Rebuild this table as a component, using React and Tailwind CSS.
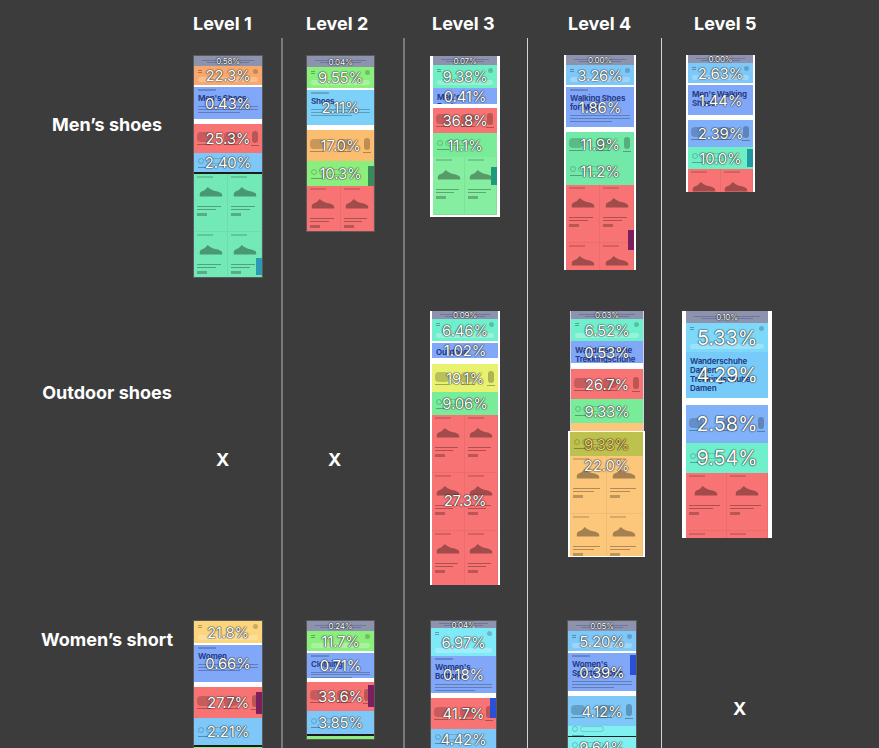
import React from "react";

const Shoe = ({ className = "" }) => (
  <svg viewBox="0 0 30 16" className={className}>
    <path d="M1 12 C1 9 4 8 7 7 L11 3 C13 5 16 7 20 8 C25 9 29 10 29 13 L29 15 L1 15 Z" fill="currentColor" />
  </svg>
);

function Pct({ p, size = "text-[15px]", pos = "center", tone = "text-white" }) {
  if (!p) return null;
  return (
    <div
      className={`absolute inset-0 flex justify-center ${pos === "top" ? "items-start pt-[2px]" : "items-center"} pointer-events-none`}
    >
      <span
        className={`${size} ${tone} leading-none font-['Inter',sans-serif] font-normal tracking-[-0.2px] [text-shadow:0_0_1px_#222,0_0_1px_#222,0_0_2px_rgba(0,0,0,0.5)]`}
      >
        {p}
      </span>
    </div>
  );
}

function Content({ s }) {
  switch (s.k) {
    case "hdr":
      return (
        <div className="h-full flex flex-col items-center justify-center gap-[1px] px-[8px]">
          <div className="w-full h-[1px] bg-[#3b4a8a]/40" />
          <div className="w-[80%] h-[1px] bg-[#3b4a8a]/40" />
        </div>
      );
    case "nav":
      return (
        <div className="h-full flex flex-col justify-between px-[4px] py-[3px]">
          <div className="flex justify-between items-center">
            <div className="w-[4px] h-[3px] border-y border-black/30" />
            <div className="w-[5px] h-[5px] rounded-sm bg-black/20" />
          </div>
          <div className="h-[5px] rounded-full bg-white/25" />
        </div>
      );
    case "title":
      return (
        <div className="h-full flex flex-col px-[4px] pt-[2px] overflow-hidden">
          <div className="w-[18px] h-[2px] bg-black/20" />
          <div className="mt-[3px] text-[8px] leading-[9px] font-bold text-[#1d2f7a]/90 font-['Inter',sans-serif] tracking-[-0.2px]">
            {s.t}
          </div>
          <div className="mt-[3px] w-full h-[1px] bg-black/25" />
          <div className="mt-[2px] w-full h-[1px] bg-black/25" />
          <div className="mt-[2px] w-[70%] h-[1px] bg-black/25" />
        </div>
      );
    case "cats":
      return (
        <div className="h-full flex justify-between items-center px-[3px] overflow-hidden">
          <div className="flex flex-col items-center gap-[2px]">
            <div className="w-[14px] h-[10px] rounded-sm bg-black/20" />
            <div className="w-[14px] h-[1px] bg-black/30" />
          </div>
          <div className="flex flex-col items-center gap-[2px]">
            <div className="w-[14px] h-[10px] rounded-sm bg-black/20" />
            <div className="w-[14px] h-[1px] bg-black/30" />
          </div>
          <div className="flex flex-col items-center gap-[2px]">
            <div className="w-[6px] h-[12px] rounded-sm bg-black/25" />
            <div className="w-[8px] h-[1px] bg-black/30" />
          </div>
        </div>
      );
    case "filter":
      return (
        <div className="h-full flex flex-col justify-center px-[4px] gap-[3px]">
          <div className="flex items-center gap-[2px]">
            <div className="w-[6px] h-[6px] rounded-full border border-black/20" />
            <div className="w-[24px] h-[6px] rounded-full border border-black/15" />
          </div>
          <div className="w-[12px] h-[1px] bg-black/30" />
        </div>
      );
    case "prod":
      return (
        <div className="h-full grid grid-cols-2 content-start overflow-hidden">
          {[0, 1, 2, 3, 4, 5].map((i) => (
            <div key={i} className="h-[58px] flex flex-col px-[3px] pt-[2px] border-r border-b border-black/5">
              <div className="w-[16px] h-[2px] bg-black/15" />
              <Shoe className="w-[24px] h-[14px] mt-[6px] mx-auto text-black/35" />
              <div className="mt-[8px] w-[90%] h-[1px] bg-black/30" />
              <div className="mt-[2px] w-[70%] h-[1px] bg-black/30" />
              <div className="mt-[3px] w-[10px] h-[3px] bg-black/25" />
            </div>
          ))}
        </div>
      );
    default:
      return null;
  }
}

function Seg({ s, size }) {
  return (
    <div className={`relative overflow-hidden shrink-0 ${s.h} ${s.c}`}>
      <Content s={s} />
      {s.tab && <div className={`absolute right-0 w-[6px] ${s.tab}`} />}
      <Pct p={s.p} size={s.k === "hdr" ? "text-[8px]" : s.sz || size} pos={s.pos} tone={s.tone} />
    </div>
  );
}

function Thumb({ segs, w, frame = "border border-[#5a5a5a]", size }) {
  return (
    <div className={`flex flex-col overflow-hidden ${w} ${frame}`}>
      {segs.map((s, i) => (
        <Seg key={i} s={s} size={size} />
      ))}
    </div>
  );
}

const HDR = "bg-[#8d93ad]";
const GAP = { h: "h-[2px]", c: "bg-white" };
const GAP5 = { h: "h-[5px]", c: "bg-white" };

const Cell = ({ h, pl, children }) => (
  <div className={`${h} ${pl} pt-[17px] overflow-hidden`}>{children}</div>
);

const Xmark = ({ pt, pl }) => (
  <div className={`${pt} ${pl} text-[18px] leading-[20px] font-bold`}>X</div>
);

const R1 = "h-[256px]";
const R2 = "h-[309px]";
const R3 = "h-[145px]";

function ColHeader({ pl, children }) {
  return (
    <div className={`h-[38px] pt-[14px] ${pl} text-[18px] leading-[20px] font-bold whitespace-nowrap`}>{children}</div>
  );
}

export default function App() {
  return (
    <div className="w-[879px] h-[748px] bg-[#3c3c3c] overflow-hidden flex text-white font-['Inter',sans-serif]">
      {/* labels */}
      <div className="w-[180px] shrink-0 flex flex-col">
        <div className="h-[38px]" />
        <div className={`${R1} pt-[75px] text-center pl-[34px] text-[18px] leading-[24px] font-bold`}>Men’s shoes</div>
        <div className={`${R2} pt-[87px] text-center pl-[34px] text-[18px] leading-[24px] font-bold`}>Outdoor shoes</div>
        <div className={`${R3} pt-[25px] text-center pl-[34px] text-[18px] leading-[24px] font-bold`}>Women’s short</div>
      </div>

      {/* Level 1 */}
      <div className="w-[101px] shrink-0 flex flex-col">
        <ColHeader pl="pl-[13px]">Level 1</ColHeader>
        <div className="flex-1 flex flex-col">
          <Cell h={R1} pl="pl-[13px]">
            <Thumb
              w="w-[70px]"
              segs={[
                { h: "h-[10px]", c: HDR, p: "0.58%", k: "hdr" },
                { h: "h-[19px]", c: "bg-[#f8a86c]", p: "22.3%", k: "nav" },
                GAP,
                { h: "h-[32px]", c: "bg-[#80a7f8]", p: "0.43%", k: "title", t: "Men's Shoes" },
                GAP5,
                { h: "h-[29px]", c: "bg-[#f87373]", p: "25.3%", k: "cats" },
                { h: "h-[19px]", c: "bg-[#7dc8f8]", p: "2.40%", k: "filter" },
                { h: "h-[2px]", c: "bg-[#1c1c1c]" },
                { h: "h-[103px]", c: "bg-[#72e9b6]", k: "prod", tab: "top-[84px] h-[17px] bg-[#2a9ab5]" },
              ]}
            />
          </Cell>
          <div className={R2}>
            <Xmark pt="pt-[156px]" pl="pl-[36px]" />
          </div>
          <Cell h={R3} pl="pl-[13px]">
            <Thumb
              w="w-[70px]"
              segs={[
                { h: "h-[22px]", c: "bg-[#fcd57c]", p: "21.8%", k: "nav" },
                GAP,
                { h: "h-[37px]", c: "bg-[#80a7f8]", p: "0.66%", k: "title", t: "Women" },
                GAP5,
                { h: "h-[31px]", c: "bg-[#f87373]", p: "27.7%", k: "cats", tab: "top-[5px] h-[22px] bg-[#7c1f5e]" },
                { h: "h-[27px]", c: "bg-[#7dc8f8]", p: "2.21%", k: "filter" },
                { h: "h-[2px]", c: "bg-[#1c1c1c]" },
                { h: "h-[20px]", c: "bg-[#8bef7e]" },
              ]}
            />
          </Cell>
        </div>
      </div>

      {/* Level 2 */}
      <div className="w-[122px] shrink-0 flex flex-col">
        <ColHeader pl="pl-[25px]">Level 2</ColHeader>
        <div className="flex-1 flex flex-col border-l-2 border-[#7a7a7a]">
          <Cell h={R1} pl="pl-[23px]">
            <div className="-mt-[1px] pt-[1px]">
              <Thumb
                w="w-[69px]"
                segs={[
                  { h: "h-[11px]", c: HDR, p: "0.04%", k: "hdr" },
                  { h: "h-[21px]", c: "bg-[#8bef7e]", p: "9.55%", k: "nav" },
                  GAP,
                  { h: "h-[35px]", c: "bg-[#7dd0f8]", p: "2.11%", k: "title", t: "Shoes" },
                  GAP5,
                  { h: "h-[31px]", c: "bg-[#fbbd70]", p: "17.0%", k: "cats" },
                  { h: "h-[25px]", c: "bg-[#8bef7e]", p: "10.3%", k: "filter", tab: "top-[5px] h-[20px] bg-[#3a8a5a]" },
                  { h: "h-[45px]", c: "bg-[#f87373]", k: "prod" },
                ]}
              />
            </div>
          </Cell>
          <div className={R2}>
            <Xmark pt="pt-[156px]" pl="pl-[45px]" />
          </div>
          <Cell h={R3} pl="pl-[23px]">
            <Thumb
              w="w-[69px]"
              segs={[
                { h: "h-[10px]", c: HDR, p: "0.24%", k: "hdr" },
                { h: "h-[20px]", c: "bg-[#8bef7e]", p: "11.7%", k: "nav" },
                GAP,
                { h: "h-[25px]", c: "bg-[#80a7f8]", p: "0.71%", k: "title", t: "Clothing" },
                { h: "h-[4px]", c: "bg-white" },
                { h: "h-[29px]", c: "bg-[#f87373]", p: "33.6%", k: "cats", tab: "top-[3px] h-[22px] bg-[#7c1f5e]" },
                { h: "h-[23px]", c: "bg-[#7dc8f8]", p: "3.85%", k: "filter" },
                { h: "h-[2px]", c: "bg-[#1c1c1c]" },
                { h: "h-[3px]", c: "bg-[#8bef7e]" },
              ]}
            />
          </Cell>
        </div>
      </div>

      {/* Level 3 */}
      <div className="w-[124px] shrink-0 flex flex-col">
        <ColHeader pl="pl-[29px]">Level 3</ColHeader>
        <div className="flex-1 flex flex-col border-l-2 border-[#7a7a7a]">
          <Cell h={R1} pl="pl-[25px]">
            <div className="pt-[1px]">
              <Thumb
                w="w-[70px]"
                frame="border-x-[3px] border-b-[2px] border-white"
                segs={[
                  { h: "h-[9px]", c: HDR, p: "0.07%", k: "hdr" },
                  { h: "h-[23px]", c: "bg-[#70efc4]", p: "9.38%", k: "nav" },
                  { h: "h-[16px]", c: "bg-[#80a7f8]", p: "0.41%", k: "title", t: "Men's Footwear" },
                  { h: "h-[4px]", c: "bg-white" },
                  { h: "h-[25px]", c: "bg-[#f87373]", p: "36.8%", k: "cats" },
                  { h: "h-[24px]", c: "bg-[#79ec9a]", p: "11.1%", k: "filter" },
                  { h: "h-[58px]", c: "bg-[#86eea0]", k: "prod", tab: "top-[10px] h-[18px] bg-[#1f9a7a]" },
                ]}
              />
            </div>
          </Cell>
          <Cell h={R2} pl="pl-[25px]">
            <Thumb
              w="w-[70px]"
              frame="border-x-[2px] border-white"
              segs={[
                { h: "h-[8px]", c: HDR, p: "0.09%", k: "hdr" },
                { h: "h-[22px]", c: "bg-[#70efcc]", p: "6.46%", k: "nav" },
                GAP,
                { h: "h-[15px]", c: "bg-[#80a7f8]", p: "1.02%", k: "title", t: "Outdoor Schuhe" },
                { h: "h-[6px]", c: "bg-white" },
                { h: "h-[28px]", c: "bg-[#e8f170]", p: "19.1%", k: "cats" },
                { h: "h-[23px]", c: "bg-[#79ec9a]", p: "9.06%", k: "filter" },
                { h: "h-[170px]", c: "bg-[#f87373]", p: "27.3%", k: "prod" },
              ]}
            />
          </Cell>
          <Cell h={R3} pl="pl-[25px]">
            <Thumb
              w="w-[67px]"
              segs={[
                { h: "h-[7px]", c: HDR, p: "0.04%", k: "hdr" },
                { h: "h-[28px]", c: "bg-[#80e9f8]", p: "6.97%", k: "nav" },
                { h: "h-[37px]", c: "bg-[#80a7f8]", p: "0.18%", k: "title", t: "Women's Bottoms" },
                GAP5,
                { h: "h-[31px]", c: "bg-[#f87373]", p: "41.7%", k: "cats", tab: "top-[0px] h-[20px] bg-[#2b4fd6]" },
                { h: "h-[20px]", c: "bg-[#7dc8f8]", p: "4.42%", k: "filter" },
              ]}
            />
          </Cell>
        </div>
      </div>

      {/* Level 4 */}
      <div className="w-[134px] shrink-0 flex flex-col">
        <ColHeader pl="pl-[41px]">Level 4</ColHeader>
        <div className="flex-1 flex flex-col border-l border-[#d4d4d4]">
          <Cell h={R1} pl="pl-[36px]">
            <Thumb
              w="w-[72px]"
              frame="border-x-[2px] border-white"
              segs={[
                { h: "h-[10px]", c: HDR, p: "0.00%", k: "hdr" },
                { h: "h-[20px]", c: "bg-[#7dc8f8]", p: "3.26%", k: "nav" },
                GAP,
                { h: "h-[40px]", c: "bg-[#80a7f8]", p: "1.86%", k: "title", t: "Walking Shoes for Men" },
                GAP5,
                { h: "h-[25px]", c: "bg-[#72e9a8]", p: "11.9%", k: "cats" },
                { h: "h-[28px]", c: "bg-[#72e9a8]", p: "11.2%", k: "filter" },
                { h: "h-[85px]", c: "bg-[#f87373]", k: "prod", tab: "top-[45px] h-[20px] bg-[#7c1f5e]" },
              ]}
            />
          </Cell>
          <Cell h={R2} pl="pl-[40px]">
            <div className="pl-[2px]">
              <Thumb
                w="w-[74px]"
                frame="border-x border-[#cfd3e0]"
                segs={[
                  { h: "h-[8px]", c: HDR, p: "0.03%", k: "hdr" },
                  { h: "h-[22px]", c: "bg-[#70efcc]", p: "6.52%", k: "nav" },
                  { h: "h-[22px]", c: "bg-[#80a7f8]", p: "0.53%", k: "title", t: "Wanderschuhe Trekkingschuhe" },
                  { h: "h-[6px]", c: "bg-white" },
                  { h: "h-[30px]", c: "bg-[#f87373]", p: "26.7%", k: "cats" },
                  { h: "h-[24px]", c: "bg-[#79ec9a]", p: "9.33%", k: "filter" },
                  { h: "h-[8px]", c: "bg-[#fcc77a]" },
                ]}
              />
            </div>
            <Thumb
              w="w-[77px]"
              frame="border-x-[2px] border-y border-white"
              segs={[
                { h: "h-[24px]", c: "bg-[#bdc24f]", p: "9.33%", k: "filter", tone: "text-[#f9cf63]" },
                { h: "h-[100px]", c: "bg-[#fcc77a]", p: "22.0%", k: "prod", pos: "top" },
              ]}
            />
          </Cell>
          <Cell h={R3} pl="pl-[39px]">
            <Thumb
              w="w-[70px]"
              segs={[
                { h: "h-[10px]", c: HDR, p: "0.05%", k: "hdr" },
                { h: "h-[20px]", c: "bg-[#7dc8f8]", p: "5.20%", k: "nav" },
                GAP,
                { h: "h-[38px]", c: "bg-[#80a7f8]", p: "0.39%", k: "title", t: "Women's Sports Shorts", tab: "top-[2px] h-[20px] bg-[#2b4fd6]" },
                GAP5,
                { h: "h-[30px]", c: "bg-[#7dc8f8]", p: "4.12%", k: "cats" },
                { h: "h-[10px]", c: "bg-[#80f0f0]", p: "", k: "filter" },
                { h: "h-[1px]", c: "bg-[#1c1c1c]" },
                { h: "h-[20px]", c: "bg-[#80f0f0]", p: "9.64%", k: "filter" },
              ]}
            />
          </Cell>
        </div>
      </div>

      {/* Level 5 */}
      <div className="flex-1 flex flex-col">
        <ColHeader pl="pl-[33px]">Level 5</ColHeader>
        <div className="flex-1 flex flex-col border-l border-[#d4d4d4]">
          <Cell h={R1} pl="pl-[24px]">
            <Thumb
              w="w-[69px]"
              frame="border-x-[2px] border-white"
              segs={[
                { h: "h-[8px]", c: HDR, p: "0.00%", k: "hdr" },
                { h: "h-[20px]", c: "bg-[#7dc8f8]", p: "2.63%", k: "nav" },
                GAP,
                { h: "h-[30px]", c: "bg-[#80a7f8]", p: "1.44%", k: "title", t: "Men's Walking Shoes" },
                GAP5,
                { h: "h-[27px]", c: "bg-[#7fb0f8]", p: "2.39%", k: "cats" },
                { h: "h-[22px]", c: "bg-[#70efc4]", p: "10.0%", k: "filter", tab: "top-[2px] h-[18px] bg-[#1f9aa5]" },
                { h: "h-[23px]", c: "bg-[#f87373]", k: "prod" },
              ]}
            />
          </Cell>
          <Cell h={R2} pl="pl-[20px]">
            <Thumb
              w="w-[90px]"
              size="text-[20px]"
              frame="border-x-[4px] border-white"
              segs={[
                { h: "h-[12px]", c: HDR, p: "0.10%", k: "hdr" },
                { h: "h-[29px]", c: "bg-[#7dd8fa]", p: "5.33%", k: "nav" },
                { h: "h-[46px]", c: "bg-[#76cbf8]", p: "4.29%", k: "title", t: "Wanderschuhe Damen Trekkingschuhe Damen" },
                { h: "h-[7px]", c: "bg-white" },
                { h: "h-[38px]", c: "bg-[#7fb2f8]", p: "2.58%", k: "cats" },
                { h: "h-[30px]", c: "bg-[#70efcc]", p: "9.54%", k: "filter" },
                { h: "h-[65px]", c: "bg-[#f87373]", k: "prod" },
              ]}
            />
          </Cell>
          <div className={R3}>
            <Xmark pt="pt-[96px]" pl="pl-[71px]" />
          </div>
        </div>
      </div>
    </div>
  );
}
